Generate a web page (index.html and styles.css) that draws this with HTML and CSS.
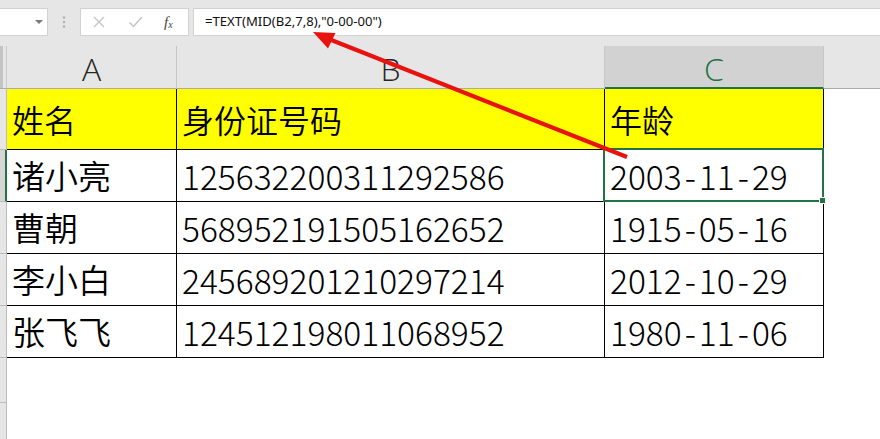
FILE: index.html
```html
<!DOCTYPE html>
<html>
<head>
<meta charset="utf-8">
<link rel="stylesheet" href="styles.css">
</head>
<body>
<div class="page">
  <div class="fbar">
    <div class="namebox"><span class="dd"></span></div>
    <div class="dots"><svg width="4" height="12" viewBox="0 0 4 12"><circle cx="2" cy="1.5" r="1.2"/><circle cx="2" cy="6" r="1.2"/><circle cx="2" cy="10.5" r="1.2"/></svg></div>
    <div class="fxbox">
      <svg class="ic" width="14" height="14" viewBox="0 0 14 14"><path d="M2 2L12 12M12 2L2 12" stroke="#c4c4c4" stroke-width="1.3" fill="none"/></svg>
      <svg class="ic" width="16" height="14" viewBox="0 0 16 14"><path d="M1.5 7.5L5.5 11.5L14 2" stroke="#c4c4c4" stroke-width="1.5" fill="none"/></svg>
      <span class="fx">f<sub>x</sub></span>
    </div>
    <div class="formula">=TEXT(MID(B2,7,8),"0-00-00")</div>
  </div>
  <div class="gap"></div>
  <div class="sheet">
    <div class="corner"></div>
    <div class="colh">A</div>
    <div class="colh">B</div>
    <div class="colh sel">C</div>
    <div class="colh rest"></div>

    <div class="rowh"></div>
    <div class="cell hdr">姓名</div>
    <div class="cell hdr">身份证号码</div>
    <div class="cell hdr">年龄</div>
    <div class="blank"></div>

    <div class="rowh selrow"></div>
    <div class="cell">诸小亮</div>
    <div class="cell num">125632200311292586</div>
    <div class="cell num active">2003<span class="hy">-</span>11<span class="hy">-</span>29<span class="selbox"><span class="handle"></span></span></div>
    <div class="blank"></div>

    <div class="rowh"></div>
    <div class="cell">曹朝</div>
    <div class="cell num">568952191505162652</div>
    <div class="cell num">1915<span class="hy">-</span>05<span class="hy">-</span>16</div>
    <div class="blank"></div>

    <div class="rowh"></div>
    <div class="cell">李小白</div>
    <div class="cell num">245689201210297214</div>
    <div class="cell num">2012<span class="hy">-</span>10<span class="hy">-</span>29</div>
    <div class="blank"></div>

    <div class="rowh"></div>
    <div class="cell">张飞飞</div>
    <div class="cell num">124512198011068952</div>
    <div class="cell num">1980<span class="hy">-</span>11<span class="hy">-</span>06</div>
    <div class="blank"></div>

    <div class="rowh"></div>
    <div class="blank wide"></div>
    <div class="rowh last"></div>
    <div class="blank wide"></div>
  </div>
  <svg class="arrow" width="880" height="439" viewBox="0 0 880 439">
    <line x1="330" y1="39.5" x2="627" y2="157" stroke="#e8120f" stroke-width="4.2"/>
    <polygon points="313,32 335.5,33 328,48.5" fill="#e8120f"/>
  </svg>
</div>
</body>
</html>
```

FILE: styles.css
```css
* { box-sizing: border-box; }
html, body { margin: 0; padding: 0; }
body {
  width: 880px;
  height: 439px;
  overflow: hidden;
  background: #fff;
  font-family: "Noto Sans CJK SC", "Noto Sans", sans-serif;
}
.page { position: relative; width: 880px; height: 439px; }

.fbar {
  height: 36px;
  background: #e6e6e6;
  padding-top: 8px;
  display: flex;
  align-items: flex-start;
}
.namebox {
  width: 48px;
  height: 28px;
  background: #fff;
  border: 1px solid #d2d2d2;
  border-left: none;
  position: relative;
}
.dd {
  position: absolute;
  left: 35px;
  top: 11px;
  width: 0; height: 0;
  border-left: 4px solid transparent;
  border-right: 4px solid transparent;
  border-top: 4px solid #7a7a7a;
}
.dots {
  width: 32px;
  height: 28px;
  display: flex;
  align-items: center;
  justify-content: center;
  fill: #b0b0b0;
}
.fxbox {
  width: 109px;
  height: 28px;
  background: #fff;
  border: 1px solid #d2d2d2;
  display: flex;
  align-items: center;
  padding-left: 11px;
}
.fxbox .ic:first-child { margin-right: 22px; }
.fxbox .ic:nth-child(2) { margin-right: 20px; }
.fx {
  font-family: "Liberation Serif", serif;
  font-style: italic;
  font-size: 15px;
  color: #444;
  line-height: 1;
}
.fx sub { font-size: 10px; vertical-align: -1px; }
.formula {
  margin-left: 4px;
  flex: 1;
  height: 28px;
  background: #fff;
  border: 1px solid #d2d2d2;
  border-right: none;
  font-family: "Noto Sans", sans-serif;
  font-size: 13.1px;
  line-height: 25px;
  padding-left: 11px;
  color: #111;
}

.gap { height: 10px; background: #e6e6e6; }

.sheet {
  display: grid;
  grid-template-columns: 7px 170px 428px 219px 56px;
  grid-template-rows: 43px 61px 52px 52px 52px 52px 45px 37px;
}
.corner {
  background: linear-gradient(to right, #c4c4c4 0 3px, #e6e6e6 3px);
  border-right: 1px solid #c8c8c8;
  border-bottom: 1px solid #ababab;
}
.colh {
  background: #e6e6e6;
  border-right: 1px solid #c6c6c6;
  border-bottom: 1px solid #ababab;
  font-family: "Open Sans", sans-serif;
  font-weight: 300;
  font-size: 32px;
  color: #262626;
  display: flex;
  justify-content: center;
  align-items: center;
  padding-top: 2px;
}
.colh.sel {
  background: #d2d2d2;
  color: #217346;
  border-bottom: 2px solid #217346;
  padding-top: 4px;
}
.colh.rest { border-right: none; }

.rowh {
  background: #e6e6e6;
  border-right: 1px solid #bcbcbc;
  border-bottom: 1px solid #bcbcbc;
}
.rowh.selrow {
  background: #d6d6d6;
  border-right: 2px solid #217346;
}
.rowh.last { border-bottom: none; }

.cell {
  border-right: 1px solid #000;
  border-bottom: 1px solid #000;
  font-size: 33px;
  font-weight: 350;
  color: #000;
  padding-left: 5px;
  display: flex;
  align-items: center;
  line-height: 1;
  white-space: nowrap;
}
.cell.num {
  font-size: 33.5px;
  font-weight: 300;
  padding-top: 1px;
}
.hy { margin: 0 3px; }
.cell.hdr {
  background: #ffff00;
  font-size: 32px;
}
.cell.active { position: relative; }
.selbox {
  position: absolute;
  left: -2px;
  top: -2px;
  right: -1px;
  bottom: -1px;
  border: 2px solid #217346;
}
.handle {
  position: absolute;
  right: -4px;
  bottom: -4px;
  width: 7px;
  height: 7px;
  background: #217346;
  border: 1px solid #fff;
}
.blank { background: #fff; }
.blank.wide { grid-column: 2 / 6; }

.arrow {
  position: absolute;
  left: 0;
  top: 0;
  pointer-events: none;
}
```
